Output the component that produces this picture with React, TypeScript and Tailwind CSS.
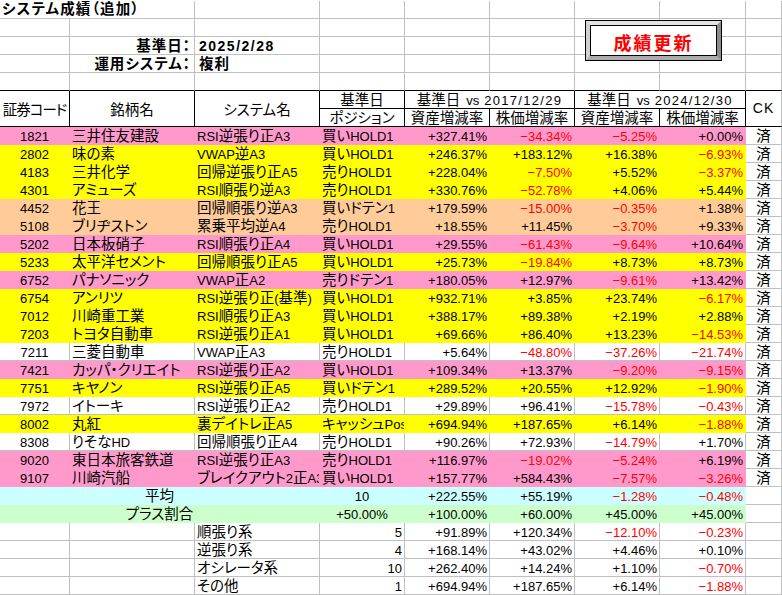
import React from 'react';

// Japanese runs get the CJK font at a slightly larger size, latin stays Arial-sized
const CJK = /([\u3000-\u30ff\u3400-\u9fff\uff00-\uffef]+)/;

const T = ({ s }: { s: string }) => (
  <>
    {s.split(CJK).map((p, i) =>
      !p ? null : CJK.test(p) ? (
        <span
          key={i}
          className="font-['Noto_Sans_CJK_JP',sans-serif] text-[14.5px] leading-[11px] [font-feature-settings:'palt']"
        >
          {p}
        </span>
      ) : (
        <span key={i}>{p}</span>
      )
    )}
  </>
);

const Cell: React.FC<{ className?: string; children?: React.ReactNode }> = ({ className = '', children }) => (
  <div className={`overflow-hidden whitespace-nowrap border-r border-b ${className}`}>{children}</div>
);

// line box of 15px pushed down 2px puts the baseline where Excel draws it
const TXT = 'leading-[15px] pt-[2px]';
const GRID = 'border-[#c0c0c0]';

const BG: Record<string, string> = {
  p: 'bg-[#ff99cc] border-transparent',
  y: 'bg-[#ffff00] border-transparent',
  o: 'bg-[#ffcc99] border-transparent',
  c: 'bg-[#ccffff] border-transparent',
  g: 'bg-[#ccffcc] border-transparent',
  w: `bg-white ${GRID}`,
};

const Num = ({ v, fill }: { v: string; fill: string }) => (
  <Cell className={`${fill} ${TXT} text-right pr-[2px] ${v.startsWith('−') ? 'text-[#ff0000]' : ''}`}>{v}</Cell>
);

type Row = [string, string, string, string, string, string, string, string, string];

const rows: Row[] = [
  ['1821', '三井住友建設', 'RSI逆張り正A3', '買いHOLD1', '+327.41%', '−34.34%', '−5.25%', '+0.00%', 'p'],
  ['2802', '味の素', 'VWAP逆A3', '買いHOLD1', '+246.37%', '+183.12%', '+16.38%', '−6.93%', 'y'],
  ['4183', '三井化学', '回帰逆張り正A5', '売りHOLD1', '+228.04%', '−7.50%', '+5.52%', '−3.37%', 'y'],
  ['4301', 'アミューズ', 'RSI順張り逆A3', '売りHOLD1', '+330.76%', '−52.78%', '+4.06%', '+5.44%', 'y'],
  ['4452', '花王', '回帰順張り逆A3', '買いドテン1', '+179.59%', '−15.00%', '−0.35%', '+1.38%', 'o'],
  ['5108', 'ブリヂストン', '累乗平均逆A4', '売りHOLD1', '+18.55%', '+11.45%', '−3.70%', '+9.33%', 'o'],
  ['5202', '日本板硝子', 'RSI順張り正A4', '買いHOLD1', '+29.55%', '−61.43%', '−9.64%', '+10.64%', 'p'],
  ['5233', '太平洋セメント', '回帰順張り正A5', '買いHOLD1', '+25.73%', '−19.84%', '+8.73%', '+8.73%', 'y'],
  ['6752', 'パナソニック', 'VWAP正A2', '売りドテン1', '+180.05%', '+12.97%', '−9.61%', '+13.42%', 'p'],
  ['6754', 'アンリツ', 'RSI逆張り正(基準)', '買いHOLD1', '+932.71%', '+3.85%', '+23.74%', '−6.17%', 'y'],
  ['7012', '川崎重工業', 'RSI順張り正A3', '買いHOLD1', '+388.17%', '+89.38%', '+2.19%', '+2.88%', 'y'],
  ['7203', 'トヨタ自動車', 'RSI逆張り正A1', '買いHOLD1', '+69.66%', '+86.40%', '+13.23%', '−14.53%', 'y'],
  ['7211', '三菱自動車', 'VWAP正A3', '売りHOLD1', '+5.64%', '−48.80%', '−37.26%', '−21.74%', 'w'],
  ['7421', 'カッパ・クリエイト', 'RSI逆張り正A2', '買いHOLD1', '+109.34%', '+13.37%', '−9.20%', '−9.15%', 'p'],
  ['7751', 'キヤノン', 'RSI逆張り正A5', '買いドテン1', '+289.52%', '+20.55%', '+12.92%', '−1.90%', 'y'],
  ['7972', 'イトーキ', 'RSI逆張り正A2', '売りHOLD1', '+29.89%', '+96.41%', '−15.78%', '−0.43%', 'w'],
  ['8002', '丸紅', '裏デイトレ正A5', 'キャッシュPos', '+694.94%', '+187.65%', '+6.14%', '−1.88%', 'y'],
  ['8308', 'りそなHD', '回帰順張り正A4', '売りHOLD1', '+90.26%', '+72.93%', '−14.79%', '+1.70%', 'w'],
  ['9020', '東日本旅客鉄道', 'RSI逆張り正A3', '売りHOLD1', '+116.97%', '−19.02%', '−5.24%', '+6.19%', 'p'],
  ['9107', '川崎汽船', 'ブレイクアウト2正A3', '買いHOLD1', '+157.77%', '+584.43%', '−7.57%', '−3.26%', 'p'],
];

const groups: [string, string, string, string, string, string][] = [
  ['順張り系', '5', '+91.89%', '+120.34%', '−12.10%', '−0.23%'],
  ['逆張り系', '4', '+168.14%', '+43.02%', '+4.46%', '+0.10%'],
  ['オシレータ系', '10', '+262.40%', '+14.24%', '+1.10%', '−0.70%'],
  ['その他', '1', '+694.94%', '+187.65%', '+6.14%', '−1.88%'],
];

const blanks = (n: number, cls = GRID) =>
  Array.from({ length: n }, (_, i) => <Cell key={i} className={cls} />);

const HEAD = `border-black text-center ${TXT}`;
const HEAD2 = 'border-black flex items-center justify-center leading-[15px]';

const VsHead = ({ date }: { date: string }) => (
  <>
    <T s="基準日" />
    <span className="ml-[6px]">vs</span>
    <span className="ml-[5px] tracking-[1.3px]">{date}</span>
  </>
);

const UpdateButton = () => (
  <div className="absolute left-[585px] top-[20px] w-[137px] h-[41px] border border-black bg-white">
    <div className="h-full border-[4px] border-t-[#e2e2e2] border-l-[#d0d0d0] border-r-[#8c8c8c] border-b-[#acacac]">
      <div className="h-full border border-black bg-white flex items-center justify-center pt-[2px]">
        <span className="font-['Noto_Sans_CJK_JP',sans-serif] font-bold text-[18px] tracking-[2px] text-[#ff0000] leading-none">
          成績更新
        </span>
      </div>
    </div>
  </div>
);

export default function App() {
  return (
    <div className="relative w-[782px] h-[595px] overflow-hidden bg-white pt-px font-['Liberation_Sans',sans-serif] text-[13px] text-black">
      <div className="grid grid-cols-[70px_125px_125px_85px_85px_85px_85px_86px_36px] auto-rows-[18px]">
        {/* sheet title + settings */}
        <Cell className={`${GRID} col-span-2 pl-[2px] font-bold tracking-[1.2px] leading-[15px] pt-px`}>
          <T s="システム成績（追加）" />
        </Cell>
        {blanks(7)}
        {blanks(9)}
        <Cell className={GRID} />
        <Cell className={`${GRID} ${TXT} text-right pr-[3px] font-bold tracking-[1px]`}>
          <T s="基準日：" />
        </Cell>
        <Cell className={`${GRID} ${TXT} pl-[4px] font-bold text-[14px] tracking-[1.5px]`}>2025/2/28</Cell>
        {blanks(6)}
        <Cell className={GRID} />
        <Cell className={`${GRID} ${TXT} text-right pr-[3px] font-bold tracking-[1px]`}>
          <T s="運用システム：" />
        </Cell>
        <Cell className={`${GRID} ${TXT} pl-[4px] font-bold tracking-[1px]`}>
          <T s="複利" />
        </Cell>
        {blanks(6)}
        {blanks(9, 'border-r-[#c0c0c0] border-b-black')}

        {/* header */}
        <Cell className={`${HEAD2} row-span-2 tracking-[-1px]`}>
          <T s="証券コード" />
        </Cell>
        <Cell className={`${HEAD2} row-span-2`}>
          <T s="銘柄名" />
        </Cell>
        <Cell className={`${HEAD2} row-span-2`}>
          <T s="システム名" />
        </Cell>
        <Cell className={HEAD}>
          <T s="基準日" />
        </Cell>
        <Cell className={`${HEAD} col-span-2`}>
          <VsHead date="2017/12/29" />
        </Cell>
        <Cell className={`${HEAD} col-span-2`}>
          <VsHead date="2024/12/30" />
        </Cell>
        <Cell className="row-span-2 border-r-[#c0c0c0] border-b-black flex items-center justify-center leading-[15px] text-[14px] tracking-[1px]">
          CK
        </Cell>
        <Cell className={HEAD}>
          <T s="ポジション" />
        </Cell>
        {['資産増減率', '株価増減率', '資産増減率', '株価増減率'].map((h, i) => (
          <Cell key={i} className={HEAD}>
            <T s={h} />
          </Cell>
        ))}

        {/* stocks */}
        {rows.map(([code, name, sys, pos, a, b, c, d, bg]) => {
          const fill = `${BG[bg]} ${TXT}`;
          return (
            <React.Fragment key={code}>
              <Cell className={`${fill} text-center`}>{code}</Cell>
              <Cell className={`${fill} pl-[2px]`}>
                <T s={name} />
              </Cell>
              <Cell className={`${fill} pl-[2px]`}>
                <T s={sys} />
              </Cell>
              <Cell className={`${fill} pl-[2px]`}>
                <T s={pos} />
              </Cell>
              {[a, b, c, d].map((v, i) => (
                <Num key={i} v={v} fill={BG[bg]} />
              ))}
              <Cell className={`${GRID} ${TXT} text-center`}>
                <T s="済" />
              </Cell>
            </React.Fragment>
          );
        })}

        {/* summary */}
        <Cell className={`${BG.c} ${TXT} col-span-3 text-center`}>
          <T s="平均" />
        </Cell>
        <Cell className={`${BG.c} ${TXT} text-center`}>10</Cell>
        {['+222.55%', '+55.19%', '−1.28%', '−0.48%'].map((v, i) => (
          <Num key={i} v={v} fill={BG.c} />
        ))}
        <Cell className={GRID} />
        <Cell className={`${BG.g} ${TXT} col-span-3 text-center`}>
          <T s="プラス割合" />
        </Cell>
        <Cell className={`${BG.g} ${TXT} text-center`}>+50.00%</Cell>
        {['+100.00%', '+60.00%', '+45.00%', '+45.00%'].map((v, i) => (
          <Num key={i} v={v} fill={BG.g} />
        ))}
        <Cell className={GRID} />

        {groups.map(([label, n, a, b, c, d]) => (
          <React.Fragment key={label}>
            <Cell className={GRID} />
            <Cell className={GRID} />
            <Cell className={`${GRID} ${TXT} pl-[2px]`}>
              <T s={label} />
            </Cell>
            <Cell className={`${GRID} ${TXT} text-right pr-[2px]`}>{n}</Cell>
            {[a, b, c, d].map((v, i) => (
              <Num key={i} v={v} fill={BG.w} />
            ))}
            <Cell className={GRID} />
          </React.Fragment>
        ))}
      </div>
      <UpdateButton />
    </div>
  );
}
